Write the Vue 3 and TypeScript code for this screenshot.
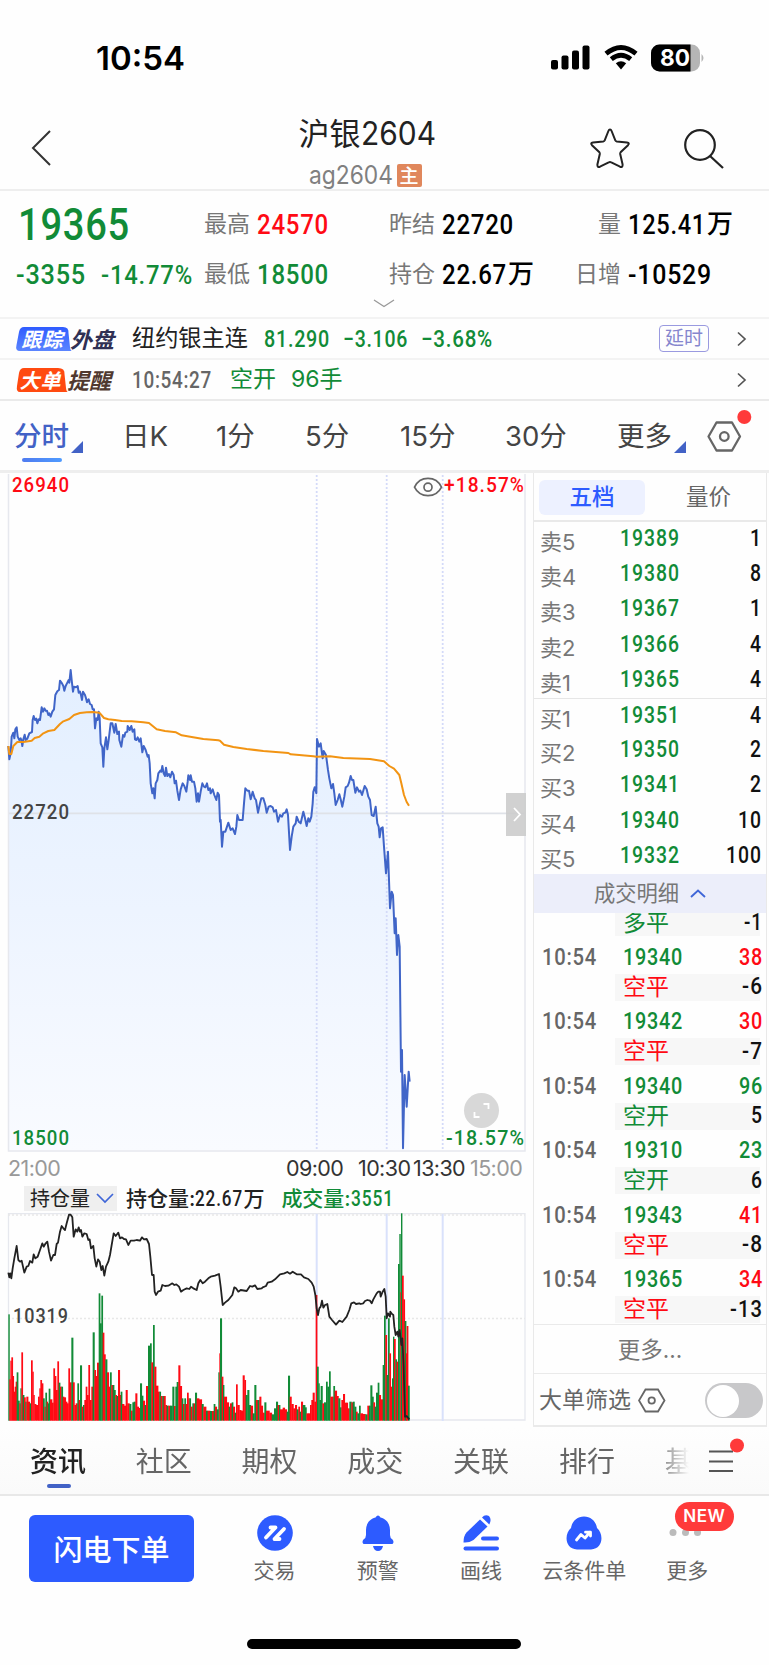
<script setup lang="ts">
import { h } from 'vue'

/* Condensed numerals: real text fitted to a given width, sitting on the baseline */
const Fit = (p: { t: string; w: number; s: number }) => {
  const height = Math.round(p.s * 0.715)
  return h('svg', { class: 'fit', width: p.w, height }, [
    h('text', { x: 0, y: height, textLength: p.w, lengthAdjust: 'spacingAndGlyphs', 'font-size': p.s, fill: 'currentColor' }, p.t),
  ])
}
Fit.props = ['t', 'w', 's']

const parse = (s: string, dx = 0, dy = 0) =>
  s.trim().split(/\s+/).map((p) => {
    const [x, y] = p.split(',').map(Number)
    return [(x + dx) / 3, (y + dy) / 3] as [number, number]
  })
const toPath = (pts: [number, number][]) => 'M' + pts.map((p) => p[0].toFixed(2) + ' ' + p[1].toFixed(2)).join('L')

const price = [
  ...parse(`25,318 28,358 32,340 35,290 40,278 43,295 46,268 50,262 53,290 58,300 62,295 64,300 67,318 70,298 74,284 77,300 82,296 88,280 96,276 98,240 101,228 105,240 109,236 112,250 116,238 120,240 125,202 129,215 133,205 137,212 141,212 145,225 148,220 152,230 157,215 162,208 166,165 172,154 177,150 180,122 186,130 190,138 193,152 197,138 202,128 206,120 208,128 212,90 215,120 219,155 222,140 228,142 233,138 236,158 240,155 243,165 246,180 249,155 255,165 258,175 261,187 266,178 270,192 275,195 278,208 282,208 285,265 289,235 293,240 296,215 299,235 302,310 307,322 310,380 313,325 318,292 322,328 326,300 329,275 332,250 337,250 343,278 347,252 352,282 357,275 358,300 364,320 369,285 373,290 376,278 382,275 383,258 389,270 394,258 398,275 403,268 405,298 409,300 413,292 418,305 422,295 427,337 431,318 437,330 443,350 446,345 449,370 452,430 457,460 460,445 464,475 467,430 472,420 475,400 481,392 484,395 487,378 491,400 495,408 498,383 502,408 507,402 511,412 516,395 521,405 524,430 528,422 532,452 537,480 542,448 548,430 553,438 559,455 563,425 565,406 570,420 572,406 576,425 582,425 586,445 590,485 594,460 597,485 602,455 607,430 612,440 616,442 621,430 625,450 630,445 632,460 638,448 643,465 649,480 653,458 657,465 660,545 662,540`, 0, 501),
  ...parse(`66,440 70,395 76,395 85,368 92,390 98,385 105,402 109,380 112,345 117,360 128,360 132,310 136,265 142,272 147,272 152,298 158,275 164,295 168,300 174,338 180,310 184,295 190,295 196,315 200,338 206,320 212,318 218,322 222,335 228,330 234,365 240,345 246,350 250,340 256,338 260,328 264,345 270,450 275,410 280,380 287,370 290,350 296,365 302,370 310,335 314,350 320,378 325,355 329,365 334,350 338,310 340,275 344,262 349,280 351,117 357,140 362,130 368,175 371,153 378,165 384,210 388,235 394,265 399,252 403,280 407,315 413,300 418,283 422,298 427,320 433,290 437,262 443,258 447,248 452,228 456,240 460,240 466,278 471,262 477,275 481,272 486,285 494,258 500,268 505,290 510,300 515,345 521,348 527,320 532,370 536,380 539,412 543,385 548,382 552,440 558,520 564,455 567,540 570,625 575,575 579,585 584,700 587,655 591,765 595,705 599,740 603,1115 606,1050 609,1345 614,1125 620,1220 626,1115 629,1145`, 600, 681),
]
const average = [
  ...parse(`25,318 28,342 34,342 40,318 52,306 70,306 95,302 104,294 118,290 130,280 145,273 163,270 180,252 190,244 208,237 222,225 240,219 260,217 278,216 298,218 312,234 325,238 345,240 365,243 395,244 430,247 447,249 470,268 495,273 528,277 545,286 575,291 610,297 655,301`, 0, 501),
  ...parse(`60,122 72,134 100,141 140,147 190,153 265,159 272,163 340,169 350,170 390,169 430,174 510,177 552,184 568,198 582,206 598,225 604,250 612,285 620,306 627,317`, 600, 681),
]
const holding = [
  ...parse(`25,398 28,412 31,400 34,415 38,385 43,355 50,318 55,360 60,365 65,362 73,398 80,380 85,378 90,363 97,368 101,343 106,355 113,350 120,330 127,310 131,320 137,310 142,305 147,335 153,362 160,345 165,345 170,312 174,308 180,275 185,258 190,265 195,270 200,250 207,224 212,224 217,232 221,290 227,268 232,275 236,262 240,275 243,270 247,290 253,280 260,282 265,300 269,298 273,325 280,318 284,355 289,380 294,358 299,365 304,390 308,378 313,407 318,380 325,365 330,345 335,315 341,280 347,288 355,278 360,295 366,292 372,297 378,298 385,315 392,302 402,302 410,300 420,302 426,292 432,298 440,297 447,312 451,350 456,405 461,405 464,455 468,465 474,455 482,452 487,435 495,438 505,437 517,430 523,435 529,433 537,440 543,455 550,450 560,445 568,447 573,440 580,445 590,450 595,430 601,420 608,430 615,425 625,415 632,410 645,407 657,402 662,440 668,495 675,488 685,480 697,465 703,442 708,445 715,455 722,450 740,453 750,438 757,440 765,436 772,447 785,445`, 0, -219),
  ...parse(`98,442 108,438 113,428 125,425 135,418 150,403 163,400 172,396 180,401 188,395 200,403 213,403 222,412 235,417 245,428 251,440 256,465 260,505 264,525 268,505 272,500 276,482 280,503 285,495 292,492 298,530 306,540 318,554 328,542 337,546 350,530 358,510 364,490 372,487 378,492 388,490 392,492 400,490 405,483 412,480 420,482 425,490 430,478 440,460 445,455 450,455 452,470 458,455 463,447 467,470 470,535 474,520 480,530 481,515 486,522 490,525 493,560 497,585 502,575 505,590 509,570 514,615 517,595 521,680 524,800 525,830 530,828 538,838`, 690, -219),
]
const pricePath = toPath(price)
const areaPath = pricePath + `L${price[price.length - 1][0]} 677L8 677Z`
const averagePath = toPath(average)
const holdingPath = toPath(holding)

/* Volume: start position, top, direction (g falling, r rising) */
const volA = `25,523g 28,718r 31,662r 34,652r 38,708r 41,755r 44,740r 47,725r 50,697g 54,782g 58,790r 61,745g 64,637r 68,765g 72,772r 76,785g 79,770r 84,785r 89,790g 93,661r 97,695r 100,765r 103,792r 108,795r 114,770r 118,745r 121,720r 125,730r 129,775g 133,800r 136,758g 140,785r 143,790g 146,746g 150,778r 156,788r 160,685r 164,708r 168,750r 172,664r 176,728g 180,740r 184,740g 188,770r 192,772r 197,785r 201,790r 205,685r 209,727r 214,593g 219,727r 223,795r 227,790r 232,730g 236,780r 240,676g 245,800r 249,795g 253,780r 257,740r 261,765r 265,675r 269,780r 274,740r 278,577g 283,690r 287,708r 291,668r 296,460g 300,550g 304,467g 308,578r 312,643r 316,658g 321,697r 326,740r 330,697g 334,735r 338,735g 342,750g 346,765r 350,768g 354,690r 359,765r 362,755g 366,792r 372,797r 377,750r 382,790r 388,792g 393,812r 397,787g 401,785g 406,760r 411,800r 416,804r 420,730g 425,767g 429,782r 434,795g 438,738r 444,617g 450,610g 454,667r 459,555g 463,680r 468,737r 474,755r 478,755g 482,768r 487,768g 491,768r 496,795r 500,797g 505,797r 510,797g 517,740g 522,798r 526,740g 530,726g 535,676r 540,738r 545,775g 549,792r 553,775g 557,792r 561,758r 565,775r 568,775g 572,800r 577,790g 581,790r 585,758g 590,775r 597,778r 605,792g 610,800r 618,812g 623,812r 630,813g 636,813r 641,792g 645,800r 650,808g 655,697g 658,640r 660,535g 665,710r 669,735g 672,770r 680,787r 686,800g 690,790r 695,787g 699,800r 704,818g 708,733r 712,795r 718,810r 723,812r 728,706r 733,720r 737,765g 742,750g 747,795g 752,797r 758,820g 763,735g 768,780r 773,780g 778,770r 783,797r 788,818r`
const volB = `103,787g 108,812r 118,818r 125,823g 132,805g 138,785g 143,795r 147,795g 150,808r 158,803r 164,808r 170,815g 174,707g 179,770r 184,792r 190,805r 195,795r 200,808g 205,800r 209,815g 213,785r 218,795g 225,802g 229,820r 236,820r 240,795r 244,780r 248,758r 253,785r 257,465r 261,680g 265,730g 268,780g 272,738g 277,790r 282,787g 288,725g 292,740g 297,694g 301,770r 306,770r 310,738g 314,752r 320,768r 325,775g 330,802g 334,780r 339,762r 344,788r 348,788r 353,805r 358,785g 364,787r 368,785g 373,800g 378,815r 382,820g 387,797g 391,820r 398,822r 406,823g 412,797r 417,797g 421,736g 426,770g 430,787r 434,800g 438,758g 443,728g 447,765r 452,778r 458,675g 462,527g 466,585r 470,705g 474,535g 478,640r 482,740r 486,715g 489,590g 492,597r 496,658g 500,665r 504,372g 508,282g 511,457r 513,220g 516,407r 520,478r 524,543g 528,640r 530,558r 534,737g 538,842g`
const bars = [...volA.split(' ').map((s) => [s, 0] as const), ...volB.split(' ').map((s) => [s, 690] as const)].map(([s, dx]) => {
  const [x, rest] = s.split(',')
  return { x: (Number(x) + dx) / 3, y: (parseInt(rest) - 219) / 3, up: rest.endsWith('r') }
})
const volume = bars.slice(0, -1).map((b, i) => ({ ...b, w: bars[i + 1].x - b.x + 0.4 }))

const periods = ['日K', '1分', '5分', '15分', '30分']
const book = [
  ['卖5', '19389', '1'], ['卖4', '19380', '8'], ['卖3', '19367', '1'], ['卖2', '19366', '4'], ['卖1', '19365', '4'],
  ['买1', '19351', '4'], ['买2', '19350', '2'], ['买3', '19341', '2'], ['买4', '19340', '10'], ['买5', '19332', '100'],
]
const ticks = [
  { p: '19340', n: '38', r: true, k: '空平', d: '-6', kr: true },
  { p: '19342', n: '30', r: true, k: '空平', d: '-7', kr: true },
  { p: '19340', n: '96', r: false, k: '空开', d: '5', kr: false },
  { p: '19310', n: '23', r: false, k: '空开', d: '6', kr: false },
  { p: '19343', n: '41', r: true, k: '空平', d: '-8', kr: true },
  { p: '19365', n: '34', r: true, k: '空平', d: '-13', kr: true },
]
const digitsWidth = (s: string) => [...s].reduce((a, c) => a + (c === '-' ? 9 : 12), 0)
const sections = ['资讯', '社区', '期权', '成交', '关联', '排行', '基']
</script>

<template>
  <div class="app">
    <header class="status">
      <Fit class="clock" t="10:54" :w="89" :s="33" />
      <svg class="sys" width="156" height="28" viewBox="0 0 156 28">
        <g><rect x="1" y="16" width="7" height="9.5" rx="2" /><rect x="11.500" y="11.500" width="7" height="14" rx="2" /><rect x="22" y="6.500" width="7" height="19" rx="2" /><rect x="32.500" y="1.500" width="7" height="24" rx="2" /></g>
        <g fill="none" stroke="#000" stroke-width="4.800">
          <path d="M56 9.600Q71 -2.800 86 9.600" /><path d="M61.300 15.200Q71 7.400 80.700 15.200" />
        </g>
        <path d="M65.800 19.300Q71 15.300 76.200 19.300L71 25.500Z" />
        <rect x="101" y="0.500" width="49" height="27" rx="8.500" fill="#b5b5b5" />
        <path d="M109.500 .5H140.500V27.500H109.500A8.500 8.500 0 0 1 101 19V9A8.500 8.500 0 0 1 109.500 .5Z" />
        <path d="M151.500 10Q155.500 14 151.500 18Z" fill="#b5b5b5" />
        <text class="batt" x="110" y="22" textLength="30" lengthAdjust="spacingAndGlyphs" fill="#fff">80</text>
      </svg>
    </header>

    <nav class="title">
      <svg class="back" width="22" height="38" viewBox="0 0 22 38"><path d="M20 2L3 19L20 36" fill="none" stroke="#333" stroke-width="2" /></svg>
      <div class="name">
        <div class="n1">沪银<Fit t="2604" :w="75" :s="32" /></div>
        <div class="n2"><Fit t="ag2604" :w="84" :s="25" /><b>主</b></div>
      </div>
      <svg class="star" width="42" height="42" viewBox="0 0 42 42"><path d="M21 2.500Q22 2.500 22.600 4L26.300 13.300Q26.700 14.200 27.800 14.400L38 15.500Q41 16 39 18.200L31.600 25.300Q31 26 31.200 27L33.600 37.500Q33.800 40.800 31 39.700L22.300 35.300Q21 34.600 19.700 35.300L11 39.700Q8.200 40.800 8.400 37.500L10.800 27Q11 26 10.400 25.300L3 18.200Q1 16 4 15.500L14.200 14.400Q15.300 14.200 15.700 13.300L19.400 4Q20 2.500 21 2.500Z" fill="none" stroke="#222" stroke-width="2" /></svg>
      <svg class="find" width="42" height="42" viewBox="0 0 42 42"><g fill="none" stroke="#222" stroke-width="2.200"><circle cx="17" cy="17" r="14.800" /><path d="M27 28L40 40" /></g></svg>
    </nav>

    <section class="quote">
      <div class="last green"><Fit t="19365" :w="112" :s="45" /></div>
      <div class="q"><i>最高</i><Fit class="red" t="24570" :w="72" :s="28" /></div>
      <div class="q"><i>昨结</i><Fit t="22720" :w="72" :s="28" /></div>
      <div class="q wide"><i>量</i><Fit t="125.41" :w="78" :s="28" /><b>万</b></div>
      <div class="chg green"><Fit t="-3355" :w="70" :s="28" /><Fit t="-14.77%" :w="92" :s="26" /></div>
      <div class="q"><i>最低</i><Fit class="green" t="18500" :w="72" :s="28" /></div>
      <div class="q"><i>持仓</i><Fit t="22.67" :w="65" :s="28" /><b>万</b></div>
      <div class="q wide"><i>日增</i><Fit t="-10529" :w="84" :s="28" /></div>
      <svg class="more" width="22" height="9" viewBox="0 0 22 9"><path d="M1 1L11 7.500L21 1" fill="none" stroke="#999" stroke-width="1.300" /></svg>
    </section>

    <section class="strip">
      <span class="logo"><svg width="56" height="24" viewBox="0 0 56 24"><defs><linearGradient id="lb" x2="0" y2="1"><stop stop-color="#2f5cff" /><stop offset="1" stop-color="#5b85ff" /></linearGradient></defs><path d="M8 0H47Q53 0 52.500 6L54 20Q54.500 24 56 24H4Q-1 24 .5 18L3 5Q4 0 8 0Z" fill="url(#lb)" /><text x="5.500" y="19.500" textLength="41" class="lt">跟踪</text></svg><em class="navy">外盘</em></span>
      <span class="mkt">纽约银主连</span>
      <span class="vals green"><Fit t="81.290" :w="66" :s="24" /><Fit t="−3.106" :w="65" :s="24" /><Fit t="−3.68%" :w="72" :s="24" /></span>
      <span class="delay">延时</span>
      <svg class="go" width="10" height="16" viewBox="0 0 10 16"><path d="M1 1.500L8 8L1 14.500" fill="none" stroke="#555" stroke-width="1.700" /></svg>
    </section>
    <section class="strip second">
      <span class="logo"><svg width="53" height="24" viewBox="0 0 53 24"><path d="M8 0H42Q49 0 48.500 6L50 20Q50.500 24 52 24H4Q0 24 1 18L3 5Q4 0 8 0Z" fill="#ff4a10" /><text x="3.500" y="19.500" textLength="41" class="lt">大单</text></svg><em class="brown">提醒</em></span>
      <Fit class="gray tm" t="10:54:27" :w="80" :s="24" />
      <span class="evt green">空开</span>
      <span class="evt lots green">96手</span>
      <svg class="go" width="10" height="16" viewBox="0 0 10 16"><path d="M1 1.500L8 8L1 14.500" fill="none" stroke="#555" stroke-width="1.700" /></svg>
    </section>

    <nav class="periods">
      <span class="on">分时<svg width="12" height="12"><path d="M12 0V12H0Z" fill="#4262c6" /></svg></span>
      <span v-for="p in periods" :key="p">{{ p }}</span>
      <span>更多<svg width="12" height="12"><path d="M12 0V12H0Z" fill="#4262c6" /></svg></span>
      <svg class="gear" width="46" height="44" viewBox="0 0 46 44"><g fill="none" stroke="#666" stroke-width="2.300"><path d="M10.500 13.500H26L34 27.500L26 41.500H10.500L2.500 27.500Z" stroke-linejoin="round" /><circle cx="18.300" cy="27.500" r="4.300" /></g><circle cx="38.300" cy="8" r="7" fill="#ff3a3a" /></svg>
    </nav>

    <main class="body">
      <div class="charts">
        <svg class="main" width="533" height="679" viewBox="0 0 533 679">
          <defs><linearGradient id="fill" x2="0" y2="1"><stop stop-color="#e3efff" /><stop offset=".5" stop-color="#edf4ff" /><stop offset="1" stop-color="#f9fbff" /></linearGradient></defs>
          <path :d="areaPath" fill="url(#fill)" />
          <path d="M8 340.300H525" stroke="#dfe2e8" stroke-width="1.800" />
          <g stroke="#d4daf8" stroke-width="1.800" stroke-dasharray="2 2"><path d="M316.700 2V678M386.700 2V678M442.700 2V678" /></g>
          <path d="M8.500 1V678H525V1" fill="none" stroke="#e6e8ee" stroke-width="1.500" />
          <path :d="pricePath" fill="none" stroke="#4065c8" stroke-width="2" stroke-linejoin="round" />
          <path :d="averagePath" fill="none" stroke="#f29413" stroke-width="2" stroke-linejoin="round" />
          <g fill="none" stroke="#666" stroke-width="1.700"><path d="M414.500 14.200C420 2.500 436 2.500 441.500 14.200C436 25.500 420 25.500 414.500 14.200Z" /><circle cx="428" cy="14.200" r="4" /></g>
          <g class="lab">
            <text x="12" y="18.500" textLength="58" lengthAdjust="spacingAndGlyphs" class="r">26940</text>
            <text x="444" y="18.500" textLength="81" lengthAdjust="spacingAndGlyphs" class="r">+18.57%</text>
            <text x="12" y="345.500" textLength="58" lengthAdjust="spacingAndGlyphs">22720</text>
            <text x="12" y="672" textLength="58" lengthAdjust="spacingAndGlyphs" class="g">18500</text>
            <text x="446" y="672" textLength="79" lengthAdjust="spacingAndGlyphs" class="g">-18.57%</text>
          </g>
          <rect x="506" y="320" width="20" height="43" fill="#ccc" opacity=".9" /><path d="M514 335L520 341.500L514 348" fill="none" stroke="#fff" stroke-width="1.800" />
          <circle cx="481.500" cy="637.500" r="17.500" fill="#d8d8d8" /><path d="M483.500 631H488.500V636M479.500 644H474.500V639" fill="none" stroke="#fff" stroke-width="1.800" />
        </svg>
        <div class="times"><span>21:00</span><span class="dk">09:00</span><span class="dk">10:30</span><span class="dk">13:30</span><span>15:00</span></div>
        <div class="legend">
          <span class="sel">持仓量<svg width="18" height="11" viewBox="0 0 18 11"><path d="M1 1L9 9L17 1" fill="none" stroke="#3f66d8" stroke-width="1.700" /></svg></span>
          <span class="lg">持仓量:<Fit t="22.67" :w="48" :s="22" />万</span>
          <span class="lg green">成交量:<Fit t="3551" :w="43" :s="22" /></span>
        </div>
        <svg class="vol" width="533" height="209" viewBox="0 0 533 209">
          <path d="M8.500 208V.7H525V207H400" fill="none" stroke="#e6e8ee" stroke-width="1.300" />
          <g stroke="#e8e8e8" stroke-width="1.500" stroke-dasharray="2 2"><path d="M8 2H525M8 105.500H525" /></g>
          <g stroke="#d9e1fb" stroke-width="2"><path d="M316.700 1V208M386.700 1V208M442.700 1V208" /></g>
          <rect v-for="(b, i) in volume" :key="i" :x="b.x" :y="b.y" :width="b.w" :height="207.700 - b.y" :class="b.up ? 'up' : 'down'" />
          <path :d="holdingPath" fill="none" stroke="#222" stroke-width="1.800" stroke-linejoin="round" />
          <g class="lab"><text x="13" y="109.500" textLength="56" lengthAdjust="spacingAndGlyphs">10319</text></g>
        </svg>
      </div>

      <aside class="side">
        <div class="switch"><span class="on">五档</span><span>量价</span></div>
        <div class="book">
          <div v-for="(b, i) in book" :key="b[0]" class="brow" :class="{ split: i === 5 }">
            <span>{{ b[0] }}</span><Fit class="green" :t="b[1]" :w="60" :s="24" /><Fit class="qty" :t="b[2]" :w="digitsWidth(b[2])" :s="24" />
          </div>
        </div>
        <div class="detail">成交明细<svg width="16" height="9" viewBox="0 0 16 9"><path d="M1 8L8 1.500L15 8" fill="none" stroke="#3f66d8" stroke-width="1.900" /></svg></div>
        <div class="ticks">
          <div class="kind first"><span class="green">多平</span><Fit t="-1" :w="19" :s="24" /></div>
          <template v-for="(t, i) in ticks" :key="i">
            <div class="tick"><Fit class="gray" t="10:54" :w="55" :s="23.500" /><Fit class="green p" :t="t.p" :w="60" :s="23.500" /><Fit :class="t.r ? 'red' : 'green'" :t="t.n" :w="24" :s="23.500" /></div>
            <div class="kind"><span :class="t.kr ? 'red' : 'green'">{{ t.k }}</span><Fit :t="t.d" :w="digitsWidth(t.d)" :s="24" /></div>
          </template>
        </div>
        <div class="moreline">更多...</div>
        <div class="filter"><span>大单筛选</span><svg width="28" height="25" viewBox="0 0 28 25"><g fill="none" stroke="#666" stroke-width="1.800"><path d="M7.500 1.500H20L26.500 12.500L20 23.500H7.500L1 12.500Z" /><circle cx="13.700" cy="12.500" r="3.200" /></g></svg><i class="toggle"></i></div>
      </aside>
    </main>

    <nav class="sections">
      <div class="scroll"><span v-for="(s, i) in sections" :key="s" :class="{ on: i === 0 }">{{ s }}</span></div>
      <svg class="menu" width="40" height="40" viewBox="0 0 40 40"><path d="M3 17.500H27M3 27.500H27M3 37H27" stroke="#555" stroke-width="2" /><circle cx="31" cy="11.500" r="7" fill="#ff3a3a" /></svg>
    </nav>

    <footer class="actions">
      <button>闪电下单</button>
      <div class="act"><svg width="36" height="36" viewBox="0 0 36 36"><circle cx="18" cy="18" r="17.800" fill="#2d5bff" /><g fill="none" stroke="#fff" stroke-width="3.800" stroke-linecap="round" stroke-linejoin="round"><path d="M13.500 12.500H18.500L9 22.500" /><path d="M27 14L17.500 24H22.500" /></g></svg>交易</div>
      <div class="act"><svg width="36" height="36" viewBox="0 0 36 36" fill="#2d5bff"><path d="M15.500 2.500Q18 -1.500 20.500 2.500C27 4 30 9.500 30 15V20Q30 23 32.500 24.500Q34.500 27 32.500 29H3.500Q1.500 27 3.500 24.500Q6 23 6 20V15C6 9.500 9 4 15.500 2.500Z" /><path d="M13 31H23Q22 36 18 36T13 31Z" /></svg>预警</div>
      <div class="act"><svg width="36" height="36" viewBox="0 0 36 36" fill="#2d5bff"><path d="M17 4.500L24.500 11.500L10.500 25Q6 28 .5 27.500Q.5 21 3.500 17.500Z" /><path d="M19 2.500Q22 -1.200 26 1Q29 4.500 26.300 9.500Z" /><rect x="18" y="21.500" width="18" height="4" rx="2" /><rect x="0.500" y="31.500" width="35.500" height="4" rx="2" /></svg>画线</div>
      <div class="act"><svg width="36" height="36" viewBox="0 0 36 36"><path d="M18 1.500C25 1.500 30 6.500 31 13C37.500 18 38 34 25 34.500H11C-2 34 -1.500 18 5 13C6 6.500 11 1.500 18 1.500Z" fill="#2d5bff" /><path d="M10.500 25L15 19.500L19 23L24 17M19.500 17.200H24.500V21" fill="none" stroke="#fff" stroke-width="2.800" stroke-linejoin="round" stroke-linecap="round" /></svg>云条件单</div>
      <div class="act last-act"><svg width="36" height="36" viewBox="0 0 36 36" fill="#bbb"><circle cx="4" cy="17.500" r="3.500" /><circle cx="16.500" cy="17.500" r="3.500" /><circle cx="28.500" cy="17.500" r="3.500" /></svg>更多<b class="new">NEW</b></div>
    </footer>
    <div class="home"></div>
  </div>
</template>

<style>
body { background: #fefefe; }
.fit { overflow: visible; flex: none; display: block; }
</style>
<style scoped>
.app { width: 769px; height: 1665px; overflow: hidden; background: #fefefe; font-family: Inter, "Noto Sans CJK SC", sans-serif; color: #111; line-height: 1; }
.app > * { box-sizing: border-box; }
.fit { font-family: Roboto, sans-serif; font-weight: 500; letter-spacing: .055em; }
.green { color: #118b37; }
.red { color: #ff0a14; }
.gray { color: #666; }
i { font-style: normal; }
.status { height: 113px; display: flex; align-items: flex-start; padding: 46px 0 0 96px; }
.clock { font-family: Inter; font-weight: 600; color: #000; letter-spacing: 0; }
.sys { margin: -2px 0 0 365px; }
.batt { font: 700 23px Inter; }
.title { height: 78px; border-bottom: 2px solid #eee; display: flex; align-items: flex-start; padding-left: 30px; }
.back { margin-top: 16px; }
.name { width: 314px; margin-left: 158px; margin-right: 65px; text-align: center; }
.n1 { display: flex; align-items: baseline; justify-content: center; font-size: 31px; color: #222; margin-top: 5px; }
.n1 .fit, .n2 .fit { font-family: Inter; font-weight: 400; letter-spacing: 0; }
.n2 { display: flex; align-items: center; justify-content: center; gap: 4px; margin-top: 14px; color: #808080; height: 24px; margin-left: -4px; }
.n2 b { background: #e0875c; color: #fff; width: 25px; height: 23px; border-radius: 2px; font: 500 19px/22px "Noto Sans CJK SC"; }
.star { margin-top: 14px; }
.find { margin: 15px 0 0 52px; }
.quote { height: 128px; border-bottom: 2px solid #f3f3f3; display: grid; grid-template-columns: 204px 185px 168px 1fr; grid-template-rows: 66px 34px 1fr; padding-top: 0; align-items: center; }
.last { padding-left: 18px; }
.chg { display: flex; align-items: flex-end; gap: 15px; padding-left: 16px; }
.q { display: flex; align-items: center; font-weight: 500; color: #000; }
.q i { font-size: 23px; color: #777; font-weight: 400; margin-right: 7px; }
.q b { font-size: 26px; font-weight: 500; margin-left: 1px; }
.q.wide i { width: 64px; text-align: right; margin-right: 7px; }
.more { grid-column: 1 / -1; margin: -2px 0 0 373px; }
.strip { height: 41px; border-bottom: 2px solid #f3f3f3; display: flex; align-items: center; padding: 0 22px 0 16px; }
.strip.second { border-bottom-color: #eaeaea; }
.logo { display: flex; width: 116px; align-items: center; }
.logo svg { overflow: visible; flex: none; }
.lt { font: italic 700 20px "Noto Sans CJK SC"; fill: #fff; }
.logo em { font: italic 600 22px/24px "Noto Sans CJK SC"; white-space: nowrap; margin: -2px 0 0 -2px; }
.navy { color: #303054; }
.brown { color: #50392f; }
.mkt { font-size: 23.200px; color: #222; width: 132px; white-space: nowrap; }
.vals { display: flex; gap: 13px; }
.delay { margin-left: auto; border: 1.500px solid #9a9ae0; border-radius: 4px; color: #8686ce; font-size: 19px; line-height: 25px; padding: 0 5px; }
.go { margin-left: 28px; }
.tm { margin-right: 18px; }
.evt { font-size: 23px; margin-right: 15px; }
.second .go { margin-left: auto; }
.periods { height: 72px; border-bottom: 3px solid #eee; display: grid; grid-template-columns: 108px 94px 89px 95px 105px 112px 90px 1fr; padding-left: 14px; align-items: start; font-size: 27.500px; color: #444; }
.periods span { margin-top: 21px; position: relative; display: flex; align-items: flex-end; height: 28px; white-space: nowrap; }
.periods span svg { margin: 0 0 -3px 2px; }
.periods .on { color: #4262c6; font-weight: 500; }
.periods .on::after { content: ""; position: absolute; left: 8px; top: 36px; width: 40px; height: 4px; border-radius: 2px; background: linear-gradient(90deg, #4f7bf0, #4f9bff); }
.gear { margin: 8px 0 0 -1px; }
.body { display: flex; height: 954px; }
.charts { width: 533px; }
.main, .vol { display: block; }
.lab text { font: 500 21px Roboto; fill: #444; letter-spacing: .055em; }
.lab .r { fill: #ff0a14; }
.lab .g { fill: #118b37; }
.times { height: 34px; display: grid; grid-template-columns: 278px 72px 55px 57px 1fr; padding: 6px 0 0 8px; font-size: 21.500px; letter-spacing: -.6px; color: #999; box-sizing: border-box; }
.times .dk { color: #333; }
.legend { height: 27px; display: flex; align-items: flex-start; padding-left: 24px; font-size: 21px; color: #222; font-weight: 500; }
.sel { background: #efefef; height: 25px; width: 93px; box-sizing: border-box; padding-left: 6px; display: flex; align-items: center; gap: 6px; font-weight: 400; font-size: 20px; }
.lg { display: flex; align-items: baseline; margin-left: 9px; line-height: 25px; white-space: nowrap; }
.lg.green { margin-left: 17px; }
.up { fill: #ff0a14; }
.down { fill: #118b37; }
.side { width: 234px; box-sizing: border-box; border: 1.500px solid #e9e9e9; border-top: 0; border-bottom: 2px solid #eaeaea; }
.switch { height: 49px; box-sizing: border-box; border-bottom: 2px solid #e9e9e9; display: grid; grid-template-columns: 106px 1fr; padding: 7px 0 0 5px; font-size: 22.500px; color: #666; text-align: center; line-height: 34px; }
.switch .on { background: #edf1ff; border-radius: 6px; color: #2d5bff; font-weight: 500; height: 35px; padding: 0; }
.switch span { padding-left: 6px; }
.brow { height: 35.200px; box-sizing: border-box; display: grid; grid-template-columns: 80px 1fr auto; align-items: center; padding: 0 4px 6px 6px; font-size: 22px; color: #777; }
.brow span { padding-top: 9px; }
.brow.split { border-top: 1.500px solid #e6e6e6; }
.qty { color: #111; }
.detail { height: 39px; background: #eceefa; display: flex; align-items: center; justify-content: center; gap: 11px; font-size: 21.300px; color: #777; }
.ticks { height: 412.500px; box-sizing: border-box; overflow: hidden; border-bottom: 1.500px solid #eaeaea; }
.tick { height: 37.500px; display: flex; align-items: center; padding: 2px 3px 0 8px; box-sizing: border-box; }
.tick .p { margin: 0 auto 0 26px; }
.kind { height: 27px; margin: 0 6px 0 81px; background: #f7f7f7; display: flex; align-items: center; justify-content: space-between; padding-left: 8px; font-size: 23px; color: #111; }
.kind .fit { margin: -3px -3px 0 0; }
.kind.first { height: 23.500px; }
.kind.first span { margin-top: -3px; }
.kind.first .fit { margin-top: -7px; }
.moreline { height: 48.500px; box-sizing: border-box; border-bottom: 1.500px solid #eaeaea; text-align: center; line-height: 49px; font-size: 22.500px; color: #777; }
.filter { height: 52px; display: flex; align-items: center; padding: 2px 3px 0 5px; font-size: 23px; color: #666; box-sizing: border-box; }
.filter svg { margin-left: 7px; }
.toggle { margin-left: auto; width: 58px; height: 35px; border-radius: 17.500px; background: #c8c8ca; position: relative; }
.toggle::after { content: ""; position: absolute; left: 1.500px; top: 1.500px; width: 32px; height: 32px; border-radius: 16px; background: #fff; }
.sections { height: 69px; border-bottom: 2px solid #e8e8e8; background: linear-gradient(#fefefe, #fafafa); display: flex; padding-left: 5px; font-size: 28px; color: #666; }
.scroll { width: 685px; overflow: hidden; display: flex; -webkit-mask-image: linear-gradient(90deg, #000 650px, transparent 684px); mask-image: linear-gradient(90deg, #000 650px, transparent 684px); }
.scroll span { flex: 0 0 105.800px; text-align: center; padding-top: 21px; position: relative; box-sizing: border-box; }
.scroll span:last-child { text-align: left; padding-left: 25px; }
.scroll .on { color: #222; font-weight: 500; }
.scroll .on::after { content: ""; position: absolute; left: 42px; top: 57px; width: 24px; height: 4px; border-radius: 2px; background: #4262c6; }
.menu { margin: 7px 0 0 16px; }
.actions { height: 143px; display: flex; align-items: flex-start; padding: 19px 0 0 29px; }
.actions button { width: 165px; height: 67px; border: 0; border-radius: 6px; background: #2d5bff; color: #fff; font: 500 29px/1 "Noto Sans CJK SC"; padding: 0; margin-right: 29px; white-space: nowrap; }
.act { width: 103.200px; display: flex; flex-direction: column; align-items: center; font-size: 21px; color: #666; gap: 9px; position: relative; white-space: nowrap; }
.new { position: absolute; left: 39px; top: -13px; width: 59px; height: 29px; border-radius: 15px; background: #ff3a3a; color: #fff; font: 600 17px/29px Inter; text-align: center; letter-spacing: .5px; }
.home { width: 274px; height: 10px; border-radius: 5px; background: #000; margin-left: 247px; }
</style>
